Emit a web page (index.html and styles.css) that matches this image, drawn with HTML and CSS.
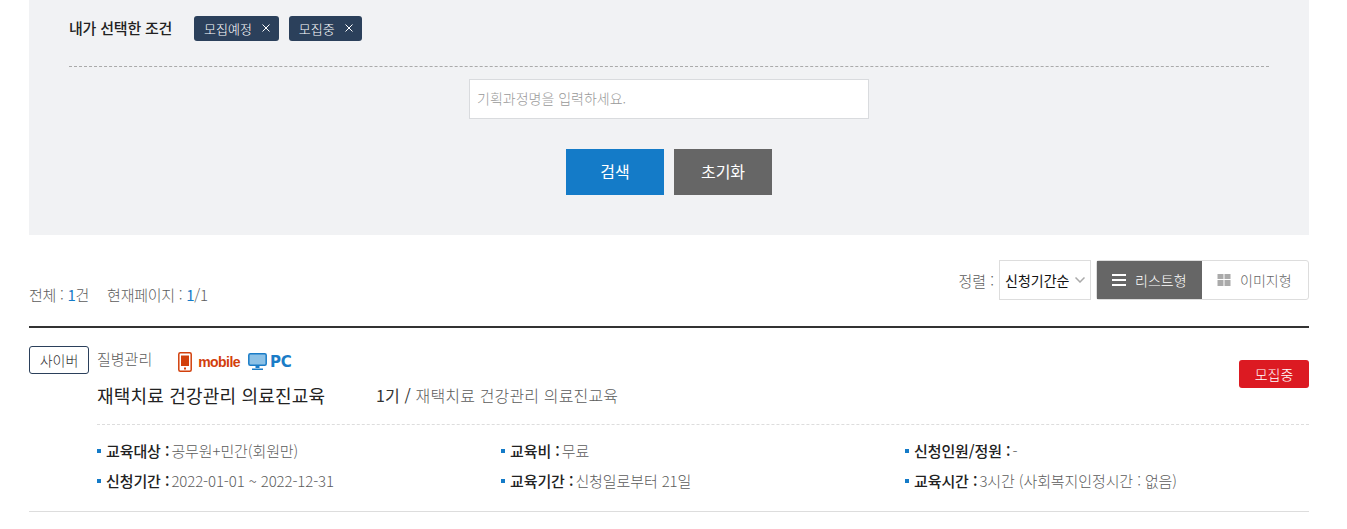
FILE: index.html
```html
<!DOCTYPE html>
<html lang="ko">
<head>
  <meta charset="UTF-8">
  <meta name="viewport" content="width=device-width, initial-scale=1.0">
  <title>기획과정 검색</title>
  <link rel="stylesheet" href="styles.css">
</head>
<body>
  <div class="wrap">
    <section class="search-box">
      <div class="selected-row">
        <strong class="selected-title">내가 선택한 조건</strong>
        <span class="tag">모집예정 <svg class="tag-x" viewBox="0 0 8 8"><path d="M0.5 0.5L7.5 7.5M7.5 0.5L0.5 7.5"/></svg></span>
        <span class="tag">모집중 <svg class="tag-x" viewBox="0 0 8 8"><path d="M0.5 0.5L7.5 7.5M7.5 0.5L0.5 7.5"/></svg></span>
      </div>
      <div class="search-input-row">
        <input type="text" class="search-input" placeholder="기획과정명을 입력하세요.">
      </div>
      <div class="btn-row">
        <button class="btn btn-search">검색</button>
        <button class="btn btn-reset">초기화</button>
      </div>
    </section>

    <div class="list-head">
      <p class="count">전체 : <b>1</b>건 <span class="count-page">현재페이지 : <b>1</b>/1</span></p>
      <div class="list-tools">
        <span class="sort-label">정렬 :</span>
        <div class="sort-select">신청기간순
          <svg class="sort-arrow" viewBox="0 0 10 6"><path d="M0.5 0.5L5 5L9.500 0.5"/></svg>
        </div>
        <div class="view-switch">
          <a class="view-btn view-on">
            <svg class="view-icon" viewBox="0 0 14 12"><path d="M0 0h14v2H0zM0 5h14v2H0zM0 10h14v2H0z"/></svg>
            리스트형
          </a>
          <a class="view-btn">
            <svg class="view-icon" viewBox="0 0 13 12"><path d="M0 0h6v5H0zM7 0h6v5H7zM0 6h6v6H0zM7 6h6v6H7z"/></svg>
            이미지형
          </a>
        </div>
      </div>
    </div>

    <article class="course">
      <div class="course-top">
        <span class="badge-type">사이버</span>
        <div class="course-main">
          <div class="course-meta">
            <span class="course-cate">질병관리</span>
            <span class="device device-mobile">
              <svg class="device-icon" viewBox="0 0 14 20"><rect x="0.8" y="0.800" width="12.400" height="18.400" rx="1.500" fill="none" stroke="#d2400c" stroke-width="1.500"/><rect x="3" y="3.500" width="8" height="10.500" fill="#d2400c"/><rect x="6" y="15.500" width="2" height="2" fill="#d2400c"/></svg>
              mobile
            </span>
            <span class="device device-pc">
              <svg class="device-icon-pc" viewBox="0 0 19 18"><rect x="0.800" y="0.800" width="17.400" height="11.400" rx="1.500" fill="#8cc1e6" stroke="#1a7cc7" stroke-width="1.500"/><path d="M7.500 13h4v2h-4zM4 15.500h11V17H4z" fill="#1a7cc7"/></svg>
              PC
            </span>
          </div>
          <div class="course-title-row">
            <h2 class="course-title">재택치료 건강관리 의료진교육</h2>
            <p class="course-sub"><b>1기 /</b> 재택치료 건강관리 의료진교육</p>
          </div>
        </div>
        <span class="badge-status">모집중</span>
      </div>
      <ul class="info-grid">
        <li><b>교육대상 :</b> 공무원+민간(회원만)</li>
        <li><b>교육비 :</b> 무료</li>
        <li><b>신청인원/정원 :</b> -</li>
        <li><b>신청기간 :</b> 2022-01-01 ~ 2022-12-31</li>
        <li><b>교육기간 :</b> 신청일로부터 21일</li>
        <li><b>교육시간 :</b> 3시간 (사회복지인정시간 : 없음)</li>
      </ul>
    </article>
  </div>
</body>
</html>
```

FILE: styles.css
```css
* {
  box-sizing: border-box;
}

body {
  margin: 0;
  background-color: #fff;
  color: #5c5c5c;
  font-family: "Noto Sans CJK KR", "Noto Sans", sans-serif;
  font-size: 15px;
  font-weight: 300;
}

.wrap {
  width: 1280px;
  margin-left: 29px;
}

.search-box {
  height: 235px;
  padding: 16px 40px 0;
  background-color: #f1f2f4;
}

.selected-row {
  display: flex;
  align-items: center;
  gap: 10px;
  height: 51px;
  padding-bottom: 26px;
  border-bottom: 1px dashed #aaa;
}

.selected-title {
  width: 115px;
  padding-bottom: 2px;
  color: #222;
  font-size: 15px;
  font-weight: 500;
  letter-spacing: -0.2px;
}

.tag {
  display: flex;
  align-items: center;
  justify-content: space-between;
  height: 25px;
  padding: 0 9px 0 10px;
  gap: 10px;
  background-color: #2b405b;
  border-radius: 3px;
  color: #fff;
  font-size: 13px;
}

.tag-x {
  width: 8px;
  height: 8px;
  stroke: #fff;
  stroke-width: 1;
  fill: none;
}

.search-input-row {
  display: flex;
  justify-content: center;
  margin-top: 12px;
}

.search-input {
  width: 400px;
  height: 40px;
  padding: 0 7px 2px;
  background-color: #fff;
  border: 1px solid #d9dbde;
  font-family: inherit;
  font-size: 14px;
  font-weight: 300;
}

.search-input::placeholder {
  color: #999;
}

.btn-row {
  display: flex;
  justify-content: center;
  gap: 10px;
  margin-top: 30px;
}

.btn {
  width: 98px;
  height: 46px;
  padding: 0 0 2px;
  border: none;
  color: #fff;
  font-family: inherit;
  font-size: 16px;
  font-weight: 400;
}

.btn-search {
  background-color: #147bc8;
}

.btn-reset {
  background-color: #666;
}

.list-head {
  display: flex;
  justify-content: space-between;
  align-items: flex-start;
  height: 93px;
  padding-top: 25px;
  border-bottom: 2px solid #333;
}

.count {
  margin: 24px 0 0;
  line-height: 22px;
  letter-spacing: -0.25px;
}

.count b {
  color: #147bc8;
  font-weight: 400;
}

.count-page {
  margin-left: 14px;
}

.list-tools {
  display: flex;
  align-items: center;
  gap: 5px;
}

.sort-select {
  display: flex;
  align-items: center;
  justify-content: space-between;
  width: 92px;
  height: 40px;
  padding: 0 5px;
  border: 1px solid #ddd;
  color: #111;
  font-size: 14px;
  font-weight: 400;
}

.sort-arrow {
  width: 10px;
  height: 6px;
  fill: none;
  stroke: #aaa;
  stroke-width: 1.500;
}

.view-switch {
  display: flex;
  height: 40px;
  border: 1px solid #ddd;
  border-radius: 3px;
}

.view-btn {
  display: flex;
  align-items: center;
  gap: 9px;
  padding-left: 15px;
  width: 106px;
  color: #666;
  font-size: 14px;
}

.view-on {
  width: 105px;
  background-color: #666;
  color: #fff;
}

.view-icon {
  width: 14px;
  height: 12px;
  fill: #aaa;
}

.view-on .view-icon {
  fill: #fff;
}

.course {
  height: 184px;
  padding-top: 18px;
  border-bottom: 1px solid #ddd;
}

.course-top {
  display: flex;
  align-items: flex-start;
  height: 78px;
}

.badge-type {
  display: flex;
  align-items: center;
  justify-content: center;
  width: 60px;
  height: 28px;
  border: 1px solid #2b405b;
  border-radius: 3px;
  color: #333;
  font-size: 14px;
}

.course-main {
  flex: 1;
  margin-left: 8px;
}

.course-meta {
  display: flex;
  align-items: center;
  height: 28px;
  padding-top: 3px;
}

.course-cate {
  margin: 0 26px 6px 0;
}

.device {
  display: flex;
  align-items: center;
  font-family: "Liberation Sans", Arial, sans-serif;
  font-weight: 700;
}

.device-mobile {
  gap: 6px;
  margin-right: 8px;
  color: #d2400c;
  font-size: 14px;
  letter-spacing: -0.55px;
}

.device-pc {
  gap: 3px;
  color: #1a7cc7;
  font-size: 15px;
  font-family: "DejaVu Sans", sans-serif;
  letter-spacing: -0.3px;
}

.device-icon {
  width: 14px;
  height: 20px;
}

.device-icon-pc {
  width: 19px;
  height: 18px;
}

.course-title-row {
  display: flex;
  align-items: center;
  margin-top: 8px;
}

.course-title {
  width: 279px;
  margin: 0;
  color: #222;
  font-size: 18px;
  font-weight: 400;
  letter-spacing: 0.2px;
}

.course-sub {
  margin: 0;
  font-size: 16px;
  letter-spacing: 0.15px;
}

.course-sub b {
  color: #333;
  font-weight: 400;
}

.badge-status {
  display: flex;
  align-items: center;
  justify-content: center;
  width: 70px;
  height: 28px;
  margin-top: 14px;
  background-color: #dc1a22;
  border-radius: 3px;
  color: #fff;
  font-size: 14px;
}

.info-grid {
  display: grid;
  grid-template-columns: repeat(3, 404px);
  row-gap: 8px;
  margin: 0 0 0 68px;
  padding: 15px 0 0;
  border-top: 1px dashed #ddd;
  list-style: none;
  letter-spacing: -0.1px;
}

.info-grid li {
  position: relative;
  padding-left: 9px;
  line-height: 22px;
}

.info-grid li::before {
  content: "";
  position: absolute;
  left: 0;
  top: 9px;
  width: 4px;
  height: 4px;
  background-color: #147bc8;
}

.info-grid b {
  margin-right: -2px;
  color: #222;
  font-weight: 500;
}
```
